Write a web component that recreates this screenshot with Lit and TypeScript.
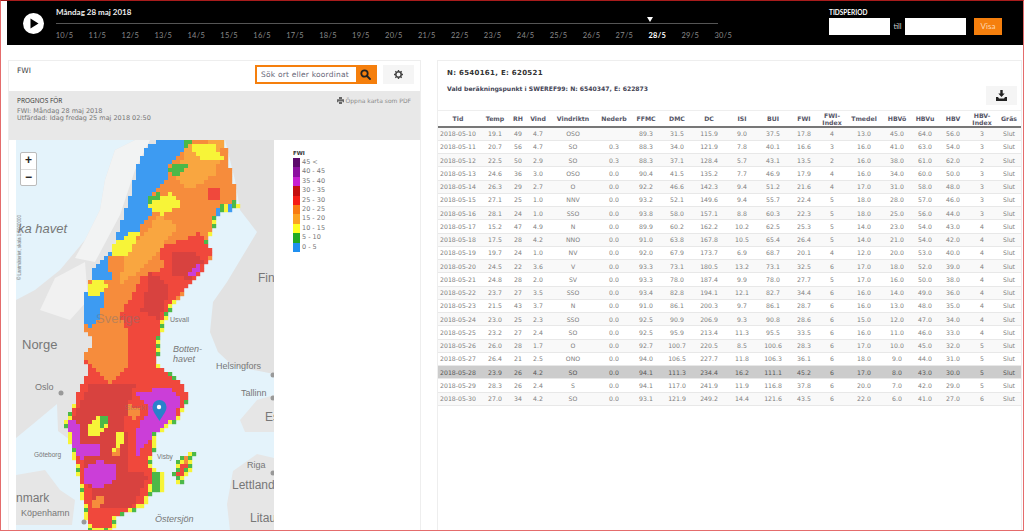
import { LitElement, html, css, svg } from "lit";
import { customElement } from "lit/decorators.js";

type Pt = number[];

const DAYS = Array.from({ length: 21 }, (_, i) => `${i + 10}/5`);

// each column's centre in the reference gives these widths, text overflows centred
const COLS = [40, 34, 12, 28, 42, 40, 24, 38, 26, 40, 22, 40, 16, 48, 18, 38, 18, 40, 14, 5];

const HEAD = ["Tid", "Temp", "RH", "Vind", "Vindriktn", "Nederb", "FFMC", "DMC", "DC", "ISI", "BUI", "FWI", "FWI-<br>Index", "Tmedel", "HBVö", "HBVu", "HBV", "HBV-<br>Index", "Gräs"];

const ROWS = `10 19.1 49 4.7 OSO - 89.3 31.5 115.9 9.0 37.5 17.8 4 13.0 45.0 64.0 56.0 3
11 20.7 56 4.7 SO 0.3 88.3 34.0 121.9 7.8 40.1 16.6 3 16.0 41.0 63.0 54.0 3
12 22.5 50 2.9 SO 0.3 88.3 37.1 128.4 5.7 43.1 13.5 2 16.0 38.0 61.0 62.0 2
13 24.6 36 3.0 OSO 0.0 90.4 41.5 135.2 7.7 46.9 17.9 4 16.0 34.0 60.0 50.0 3
14 26.3 29 2.7 O 0.0 92.2 46.6 142.3 9.4 51.2 21.6 4 17.0 31.0 58.0 48.0 3
15 27.1 25 1.0 NNV 0.0 93.2 52.1 149.6 9.4 55.7 22.4 5 18.0 28.0 57.0 46.0 3
16 28.1 24 1.0 SSO 0.0 93.8 58.0 157.1 8.8 60.3 22.3 5 18.0 25.0 56.0 44.0 3
17 15.2 47 4.9 N 0.0 89.9 60.2 162.2 10.2 62.5 25.3 5 14.0 23.0 54.0 43.0 4
18 17.5 28 4.2 NNO 0.0 91.0 63.8 167.8 10.5 65.4 26.4 5 14.0 21.0 54.0 42.0 4
19 19.7 24 1.0 NV 0.0 92.0 67.9 173.7 6.9 68.7 20.1 4 12.0 20.0 53.0 40.0 4
20 24.5 22 3.6 V 0.0 93.3 73.1 180.5 13.2 73.1 32.5 6 17.0 18.0 52.0 39.0 4
21 24.8 28 2.0 SV 0.0 93.3 78.0 187.4 9.9 78.0 27.7 5 17.0 16.0 50.0 38.0 4
22 23.7 27 3.5 SSO 0.0 93.4 82.8 194.1 12.1 82.7 34.4 6 16.0 14.0 49.0 36.0 4
23 21.5 43 3.7 N 0.0 91.0 86.1 200.3 9.7 86.1 28.7 6 16.0 13.0 48.0 35.0 4
24 23.0 25 2.3 SSO 0.0 92.5 90.9 206.9 9.3 90.8 28.6 6 15.0 12.0 47.0 34.0 4
25 23.2 27 2.4 SO 0.0 92.5 95.9 213.4 11.3 95.5 33.5 6 16.0 11.0 46.0 33.0 4
26 26.0 28 1.7 O 0.0 92.7 100.7 220.5 8.5 100.6 28.3 6 17.0 10.0 45.0 32.0 5
27 26.4 21 2.5 ONO 0.0 94.0 106.5 227.7 11.8 106.3 36.1 6 18.0 9.0 44.0 31.0 5
28 23.9 26 4.2 SO 0.0 94.1 111.3 234.4 16.2 111.1 45.2 6 17.0 8.0 43.0 30.0 5
29 28.3 26 2.4 S 0.0 94.1 117.0 241.9 11.9 116.8 37.8 6 20.0 7.0 42.0 29.0 5
30 27.0 34 4.2 SO 0.0 93.1 121.9 249.2 14.4 121.6 43.5 6 22.0 6.0 41.0 27.0 6`
  .split("\n")
  .map((l) => l.split(" "));

const LEGEND = [
  ["#5c0a6b", "45 <"],
  ["#8c10a0", "40 - 45"],
  ["#c71fd0", "35 - 40"],
  ["#c40e0e", "30 - 35"],
  ["#f51c14", "25 - 30"],
  ["#f87a10", "20 - 25"],
  ["#fba320", "15 - 20"],
  ["#ffff20", "10 - 15"],
  ["#22aa22", "5 - 10"],
  ["#2090f0", "0 - 5"],
];

const BLUE = "#3d9bf2";
const GREEN = "#4cb848";
const YELLOW = "#f7f438";
const LORANGE = "#f9a640";
const ORANGE = "#f68c3c";
const RED = "#f0483c";
const DRED = "#d8423f";
const PURPLE = "#cb3ed8";

const SWEDEN: Pt[] = [[158, 140], [225, 140], [227, 155], [233, 178], [239, 208], [217, 215], [213, 232], [207, 242], [213, 255], [200, 275], [187, 288], [173, 305], [163, 325], [160, 341], [157, 364], [180, 381], [190, 396], [180, 418], [157, 434], [152, 464], [157, 474], [147, 504], [117, 518], [113, 531], [88, 531], [83, 504], [77, 471], [65, 424], [78, 393], [88, 371], [83, 358], [93, 341], [85, 332], [83, 302], [93, 268], [113, 248], [133, 185], [137, 168], [147, 148]];
const GOTLAND: Pt[] = [[180, 456], [195, 453], [190, 471], [180, 488], [173, 474]];

// painted in order, the last zone that holds a cell wins
const ZONES: [string, Pt[]][] = [
  [LORANGE, [[186, 145], [225, 140], [214, 175], [190, 190], [176, 180]]],
  [LORANGE, [[125, 255], [160, 215], [178, 225], [150, 262], [120, 285]]],
  [RED, [[187, 238], [200, 232], [213, 252], [200, 278], [173, 302], [163, 332], [160, 341], [157, 364], [180, 381], [190, 396], [180, 418], [157, 434], [152, 464], [157, 474], [147, 504], [117, 518], [113, 531], [88, 531], [83, 504], [77, 471], [65, 424], [78, 393], [88, 371], [85, 361], [110, 383], [128, 368], [128, 331], [120, 315], [133, 295], [140, 278], [163, 268], [160, 248]]],
  [RED, [[209, 190], [220, 190], [220, 199], [209, 199]]],
  [DRED, [[170, 255], [190, 250], [203, 262], [190, 280], [172, 275]]],
  [DRED, [[90, 385], [135, 385], [130, 400], [125, 420], [130, 470], [150, 475], [130, 510], [95, 505], [85, 470], [70, 425]]],
  [DRED, [[150, 272], [170, 285], [160, 320], [142, 310]]],
  [PURPLE, [[183, 277], [200, 262], [203, 268], [193, 277]]],
  [PURPLE, [[137, 394], [170, 386], [182, 398], [173, 421], [157, 431], [143, 448], [137, 458], [135, 434], [143, 418], [150, 411]]],
  [PURPLE, [[65, 419], [77, 418], [82, 444], [100, 443], [98, 456], [80, 459], [68, 444]]],
  [PURPLE, [[83, 468], [100, 461], [115, 464], [117, 478], [100, 488], [83, 484]]],
  [ORANGE, [[127, 405], [142, 408], [136, 420], [126, 416]]],
  [ORANGE, [[113, 448], [122, 444], [118, 458], [112, 458]]],
  [ORANGE, [[90, 500], [105, 495], [104, 505], [92, 508]]],
  [YELLOW, [[87, 428], [100, 414], [110, 418], [108, 428], [97, 436], [87, 436]]],
  [GREEN, [[100, 416], [110, 416], [108, 424], [100, 428]]],
  [YELLOW, [[117, 434], [125, 433], [120, 449], [113, 451]]],
  [YELLOW, [[192, 145], [213, 142], [223, 158], [203, 160], [192, 152]]],
  [BLUE, [[158, 140], [183, 140], [185, 150], [168, 165], [170, 178], [150, 198], [147, 205], [155, 213], [140, 228], [130, 245], [110, 258], [107, 268], [112, 272], [110, 280], [85, 282], [93, 268], [113, 248], [133, 185], [137, 168], [147, 148]]],
  [BLUE, [[85, 285], [107, 285], [103, 302], [100, 320], [87, 332], [83, 302]]],
  [GREEN, [[183, 141], [193, 141], [185, 148]]],
  [GREEN, [[168, 168], [183, 162], [188, 168], [177, 178], [172, 175]]],
  [YELLOW, [[147, 205], [170, 193], [183, 205], [163, 215], [153, 212]]],
  [GREEN, [[147, 198], [160, 192], [163, 195], [150, 203]]],
  [YELLOW, [[85, 285], [100, 280], [107, 285], [100, 295], [87, 295]]],
  [YELLOW, [[113, 245], [133, 232], [140, 232], [130, 252], [120, 258], [110, 258]]],
];

const inside = (x: number, y: number, poly: Pt[]) => {
  let hit = false;
  for (let i = 0, j = poly.length - 1; i < poly.length; j = i++) {
    const [xi, yi] = poly[i];
    const [xj, yj] = poly[j];
    if (yi > y !== yj > y && x < ((xj - xi) * (y - yi)) / (yj - yi) + xi) hit = !hit;
  }
  return hit;
};

const cellColor = (x: number, y: number) => {
  if (inside(x, y, GOTLAND)) {
    if (!inside(x - 5, y, GOTLAND) || !inside(x + 5, y, GOTLAND)) return (x + y) % 8 ? YELLOW : GREEN;
    return y > 462 && y < 478 ? RED : ORANGE;
  }
  // Öland and the strips off the east coast
  if (x > 150 && x < 164 && y > 470 && y < 492) return x > 158 ? YELLOW : GREEN;
  if (!inside(x, y, SWEDEN)) return null;
  const coast = !inside(x + 3, y, SWEDEN) || !inside(x, y + 3, SWEDEN);
  if (y > 400 && (coast || !inside(x - 3, y, SWEDEN))) return (x * 3 + y) % 16 < 3 ? GREEN : YELLOW;
  if (coast && y > 285 && y <= 400 && x < 175) return (x + y) % 8 < 4 ? GREEN : YELLOW;
  if (coast && y > 215 && y < 245) return (x + y) % 8 < 4 ? GREEN : YELLOW;
  if (y > 200 && y < 216 && !inside(x, y + 8, SWEDEN)) return x % 12 < 4 ? BLUE : x % 12 < 8 ? GREEN : YELLOW;
  let color = ORANGE;
  for (const [c, poly] of ZONES) if (inside(x, y, poly)) color = c;
  return color;
};

const fireCells = () => {
  const cells = [];
  for (let y = 140; y < 531; y += 4) {
    for (let x = 56; x < 244; x += 4) {
      const c = cellColor(x + 2, y + 2);
      if (c) cells.push(svg`<rect x=${x} y=${y} width="4.2" height="4.2" fill=${c} />`);
    }
  }
  return cells;
};

const poly = (points: Pt[], fill: string) =>
  svg`<polygon points=${points.map((p) => p.join(",")).join(" ")} fill=${fill} />`;

@customElement("app-root")
export class AppRoot extends LitElement {
  static styles = css`
    :host {
      display: block;
      width: 1024px;
      height: 531px;
      box-sizing: border-box;
      overflow: hidden;
      background: #fff;
      border: 1px solid #e46c6c;
      border-top-color: #a81c1c;
      font-family: "DejaVu Sans", sans-serif;
      color: #555;
    }

    header {
      margin-left: 6px;
      margin-right: -1px;
      height: 44px;
      background: #000;
      display: flex;
      color: #fff;
    }

    .play {
      margin: 12px 0 0 16px;
      width: 21px;
      height: 21px;
      flex: none;
    }

    .timeline {
      margin-left: 12px;
      width: 700px;
      flex: none;
      font-family: Lato, sans-serif;
    }

    .today {
      font-size: 8px;
      line-height: 10px;
      height: 10px;
      margin-top: 6px;
      font-weight: bold;
      color: #eee;
    }

    .track {
      margin: 6px 0 0 0;
      width: 662px;
      height: 1px;
      background: #555;
      position: relative;
    }

    .marker {
      position: absolute;
      left: 591px;
      top: -6px;
      border-left: 3px solid transparent;
      border-right: 3px solid transparent;
      border-top: 5px solid #fff;
    }

    .days {
      display: flex;
      margin: 7px 0 0 -8px;
      font-size: 7.5px;
      letter-spacing: 0.3px;
      line-height: 10px;
      color: #8a8a8a;
    }

    .days span {
      width: 32.95px;
      flex: none;
      text-align: center;
    }

    .days .on {
      color: #fff;
      font-weight: bold;
    }

    .period {
      margin-left: 73px;
      font-family: Lato, sans-serif;
    }

    .period-label {
      font-size: 6.5px;
      font-weight: bold;
      margin-top: 7px;
      line-height: 9px;
      height: 9px;
    }

    .period-row {
      display: flex;
      align-items: center;
      margin-top: 1px;
      font-size: 7.5px;
      color: #ccc;
    }

    .field {
      width: 61px;
      height: 17px;
      background: #fff;
    }

    .till {
      width: 15px;
      text-align: center;
    }

    .show {
      margin-left: 8px;
      width: 28px;
      height: 17px;
      background: #f57f0d;
      color: #ffd9b0;
      font-size: 8px;
      line-height: 17px;
      text-align: center;
    }

    main {
      display: flex;
      gap: 16px;
      margin: 15px 0 0 7px;
    }

    .map-panel {
      width: 413px;
      height: 471px;
      flex: none;
      box-sizing: border-box;
      border: 1px solid #eee;
      border-bottom: 0;
    }

    .map-top {
      height: 30px;
      display: flex;
      align-items: flex-start;
      padding: 4px 6px 0 8px;
      box-sizing: border-box;
    }

    .map-title {
      font-size: 7.5px;
      line-height: 12px;
      color: #444;
      margin-right: auto;
    }

    .search {
      width: 122px;
      height: 19px;
      box-sizing: border-box;
      border: 2px solid #f57f0d;
      display: flex;
      background: #fff;
    }

    .search span {
      flex: 1;
      font-size: 7.5px;
      line-height: 15px;
      padding-left: 4px;
      letter-spacing: 0.2px;
      color: #667;
    }

    .search i {
      width: 19px;
      background: #f57f0d;
      display: flex;
      align-items: center;
      justify-content: center;
    }

    .icon-btn {
      width: 31px;
      height: 19px;
      margin-left: 6px;
      background: #f5f5f5;
      display: flex;
      align-items: center;
      justify-content: center;
    }

    .forecast {
      height: 49px;
      background: #e8e8e8;
      padding: 5px 8px 0;
      box-sizing: border-box;
      display: flex;
      font-size: 6.5px;
      line-height: 7px;
      color: #777;
    }

    .forecast b {
      display: block;
      font-weight: normal;
      color: #333;
      line-height: 9px;
      margin-bottom: 2.5px;
      font-family: "Open Sans", sans-serif;
    }

    .pdf {
      margin-left: auto;
      display: flex;
      gap: 2px;
      height: 9px;
      align-items: center;
      color: #8a8a8a;
      font-size: 6px;
      margin-right: 1px;
    }

    .map-body {
      display: flex;
    }

    .map {
      margin-left: 7px;
      width: 258px;
      height: 391px;
      flex: none;
      position: relative;
      overflow: hidden;
    }

    .map svg {
      display: block;
    }

    .map text {
      font-family: "Liberation Sans", sans-serif;
      fill: #777;
    }

    .zoom {
      position: absolute;
      left: 4px;
      top: 12px;
      width: 17px;
      height: 34px;
      box-sizing: border-box;
      background: #fff;
      border: 1px solid #bbb;
      border-radius: 2px;
      display: grid;
      grid-template-rows: 1fr 1fr;
      font-family: "Liberation Sans", sans-serif;
      font-size: 12px;
      font-weight: bold;
      line-height: 15px;
      text-align: center;
      color: #222;
    }

    .zoom span + span {
      border-top: 1px solid #ddd;
    }

    .legend {
      margin: 9px 0 0 19px;
      font-size: 6.5px;
      color: #777;
    }

    .legend b {
      display: block;
      font-size: 5.5px;
      line-height: 9px;
      color: #333;
    }

    .legend div {
      display: flex;
      height: 9.4px;
      line-height: 9.4px;
      align-items: center;
    }

    .legend i {
      width: 7px;
      height: 100%;
      margin-right: 2px;
    }

    .data-panel {
      width: 585px;
      flex: none;
      height: 471px;
      box-sizing: border-box;
      border: 1px solid #eee;
      border-bottom: 0;
      position: relative;
    }

    h1 {
      margin: 6px 0 0 9px;
      font-size: 7px;
      line-height: 12px;
      letter-spacing: 0.3px;
      color: #333;
    }

    h2 {
      margin: 4px 0 0 9px;
      font-size: 6.1px;
      line-height: 12px;
      color: #445;
    }

    .export {
      position: absolute;
      left: 548px;
      top: 25px;
      width: 31px;
      height: 19px;
      background: #f5f5f5;
      display: flex;
      align-items: center;
      justify-content: center;
    }

    table {
      margin-top: 15px;
      table-layout: fixed;
      border-collapse: collapse;
      width: 583px;
      font-size: 6.2px;
    }

    th {
      height: 15px;
      padding: 0;
      border-top: 1px solid #eee;
      border-bottom: 2px solid #777;
      font-weight: bold;
      font-size: 6.2px;
      line-height: 7px;
      color: #556;
    }

    td {
      height: 13.25px;
      padding: 0;
      border-bottom: 1px solid #e8e8e8;
      box-sizing: border-box;
      color: #808080;
    }

    tbody tr:nth-child(odd) {
      background: #f9f9f9;
    }

    tbody tr.now {
      background: #ccc;
    }

    tr.now td {
      color: #555;
    }

    .cell {
      display: flex;
      justify-content: center;
      white-space: nowrap;
      text-align: center;
    }
  `;

  renderMap() {
    return html`<svg width="258" height="391" viewBox="16 140 258 391">
      <rect x="16" y="140" width="258" height="391" fill="#e4f3fb" />
      ${poly([[135, 140], [115, 150], [105, 180], [100, 210], [85, 240], [60, 270], [35, 290], [16, 300], [16, 438], [33, 424], [57, 404], [58, 431], [70, 440], [100, 400], [140, 260], [160, 140]], "#e4e4e4")}
      ${poly([[135, 140], [115, 150], [105, 180], [100, 210], [85, 240], [75, 258], [95, 262], [120, 215], [135, 170], [150, 140]], "#f2f3f3")}
      ${poly([[55, 278], [85, 262], [88, 300], [70, 320], [40, 310]], "#f1f1f1")}
      ${poly([[225, 140], [274, 140], [274, 374], [233, 366], [218, 352], [210, 332], [213, 302], [227, 282], [257, 232], [240, 210], [235, 180]], "#e2e2e2")}
      ${poly([[240, 420], [257, 400], [274, 395], [274, 432], [245, 432]], "#e6e6e6")}
      ${poly([[227, 504], [233, 471], [257, 454], [274, 458], [274, 531], [230, 531]], "#e6e6e6")}
      ${poly([[16, 475], [45, 470], [60, 490], [75, 500], [72, 525], [16, 525]], "#e6e6e6")}
      ${fireCells()}
      <text x="18" y="233" font-size="13" font-style="italic">ka havet</text>
      <text x="258" y="282" font-size="12">Fin</text>
      <text x="96" y="323" font-size="13" opacity="0.45">Sverige</text>
      <text x="170" y="322" font-size="7">Usvall</text>
      <text x="22" y="349" font-size="13">Norge</text>
      <text x="173" y="352" font-size="9" font-style="italic">Botten-</text>
      <text x="173" y="362" font-size="9" font-style="italic">havet</text>
      <text x="216" y="369" font-size="9">Helsingfors</text>
      <text x="241" y="396" font-size="9">Tallinn</text>
      <text x="35" y="390" font-size="9">Oslo</text>
      <text x="265" y="421" font-size="12">Es</text>
      <text x="125" y="410" font-size="8" opacity="0.4">Stockholm</text>
      <text x="34" y="457" font-size="6.5">Göteborg</text>
      <text x="157" y="459" font-size="6.5">Visby</text>
      <text x="247" y="468" font-size="9">Riga</text>
      <text x="232" y="489" font-size="12">Lettland</text>
      <text x="16" y="502" font-size="12">nmark</text>
      <text x="21" y="516" font-size="9">Köpenhamn</text>
      <text x="155" y="522" font-size="9" font-style="italic">Östersjön</text>
      <text x="250" y="522" font-size="12">Litau</text>
      <text x="21" y="280" font-size="4.5" transform="rotate(-90 21 280)">© Lantmäteriet, skala 1:5000000</text>
      <circle cx="61" cy="393" r="2.5" fill="#999" />
      <circle cx="84" cy="522" r="2.5" fill="#999" />
      <circle cx="273" cy="375" r="2.5" fill="#999" />
      <circle cx="273" cy="398" r="2.5" fill="#999" />
      <circle cx="273" cy="473" r="2.5" fill="#999" />
      <path d="M159.5 421 C156 415 152.5 411.5 152.5 407 a7 7 0 0 1 14 0 C166.5 411.5 163 415 159.5 421z" fill="#2a81cb" />
      <circle cx="159" cy="407" r="2.2" fill="#fff" />
    </svg>`;
  }

  render() {
    return html`
      <header>
        <svg class="play" viewBox="0 0 21 21">
          <circle cx="10.5" cy="10.5" r="10.5" fill="#fff" />
          <path d="M7.5 5.5 L15.5 10.5 L7.5 15.5z" fill="#000" />
        </svg>
        <div class="timeline">
          <div class="today">Måndag 28 maj 2018</div>
          <div class="track"><span class="marker"></span></div>
          <div class="days">
            ${DAYS.map((d) => html`<span class=${d === "28/5" ? "on" : ""}>${d}</span>`)}
          </div>
        </div>
        <div class="period">
          <div class="period-label">TIDSPERIOD</div>
          <div class="period-row">
            <div class="field"></div>
            <div class="till">till</div>
            <div class="field"></div>
            <div class="show">Visa</div>
          </div>
        </div>
      </header>
      <main>
        <section class="map-panel">
          <div class="map-top">
            <div class="map-title">FWI</div>
            <div class="search">
              <span>Sök ort eller koordinat</span>
              <i>
                <svg width="11" height="11" viewBox="0 0 11 11" fill="none" stroke="#222" stroke-width="1.8">
                  <circle cx="4.5" cy="4.5" r="3.2" />
                  <path d="M7 7 L10 10" stroke-linecap="round" />
                </svg>
              </i>
            </div>
            <div class="icon-btn">
              <svg width="9" height="9" viewBox="0 0 10 10">
                <circle cx="5" cy="5" r="3" fill="none" stroke="#444" stroke-width="1.7" />
                <path d="M5 0v2M5 8v2M0 5h2M8 5h2M1.5 1.5l1.4 1.4M7.1 7.1l1.4 1.4M8.5 1.5L7.1 2.9M2.9 7.1L1.5 8.5" stroke="#444" stroke-width="1.5" />
              </svg>
            </div>
          </div>
          <div class="forecast">
            <div>
              <b>PROGNOS FÖR</b>
              FWI: Måndag 28 maj 2018<br />
              Utfärdad: Idag fredag 25 maj 2018 02:50
            </div>
            <div class="pdf">
              <svg width="7" height="7" viewBox="0 0 7 7" fill="#666">
                <path d="M2 0h3v2H2zM0 2.2h7v3H5.5V4h-4v1.2H0zM2 4.6h3V7H2z" />
              </svg>
              Öppna karta som PDF
            </div>
          </div>
          <div class="map-body">
            <div class="map">
              ${this.renderMap()}
              <div class="zoom"><span>+</span><span>−</span></div>
            </div>
            <div class="legend">
              <b>FWI</b>
              ${LEGEND.map(([c, t]) => html`<div><i style="background:${c}"></i>${t}</div>`)}
            </div>
          </div>
        </section>
        <section class="data-panel">
          <h1>N: 6540161, E: 620521</h1>
          <h2>Vald beräkningspunkt i SWEREF99: N: 6540347, E: 622873</h2>
          <div class="export">
            <svg width="11" height="11" viewBox="0 0 11 11" fill="#222">
              <path d="M4.3 0h2.4v3.5h2L5.5 7 2.3 3.5h2zM0 7h2l1 1.5h5L9 7h2v4H0z" />
            </svg>
          </div>
          <table>
            <colgroup>${COLS.map((w) => html`<col style="width:${w}px" />`)}</colgroup>
            <thead>
              <tr>
                ${HEAD.map((h) => {
                  const [a, b] = h.split("<br>");
                  return html`<th><div class="cell">${b ? html`<span>${a}<br />${b}</span>` : a}</div></th>`;
                })}
                <th></th>
              </tr>
            </thead>
            <tbody>
              ${ROWS.map(
                (r) => html`<tr class=${r[0] === "28" ? "now" : ""}>
                  <td><div class="cell">2018-05-${r[0]}</div></td>
                  ${r.slice(1).map((v) => html`<td><div class="cell">${v === "-" ? "" : v}</div></td>`)}
                  <td><div class="cell">Slut</div></td>
                  <td></td>
                </tr>`,
              )}
            </tbody>
          </table>
        </section>
      </main>
    `;
  }
}
